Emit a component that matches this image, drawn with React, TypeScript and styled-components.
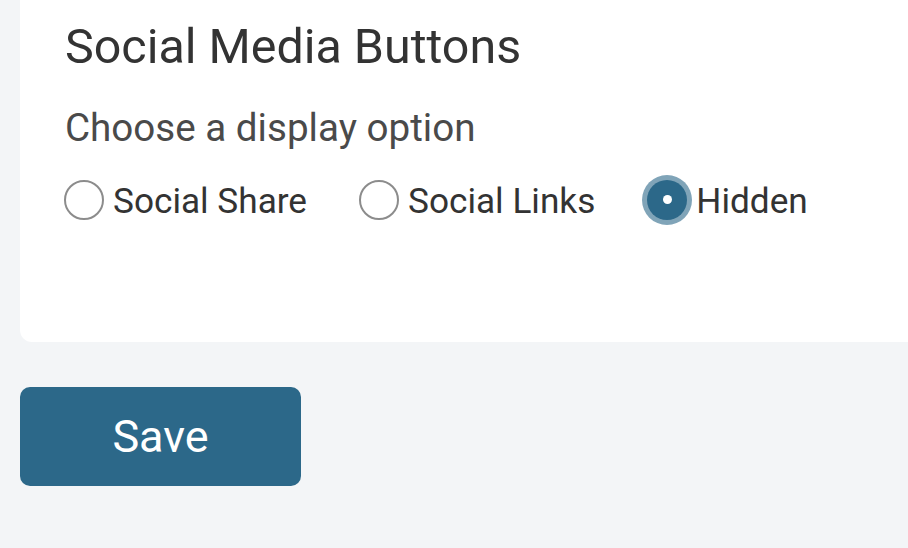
import React, { useState } from "react";
import styled, { createGlobalStyle } from "styled-components";

const GlobalStyle = createGlobalStyle`
  html, body {
    margin: 0;
    padding: 0;
    background: #f3f5f7;
    font-family: Roboto, "Liberation Sans", Arial, sans-serif;
    overflow: hidden;
  }
  * { box-sizing: border-box; }
`;

const Page = styled.div`
  width: 908px;
  height: 548px;
  padding-left: 20px;
  display: flex;
  flex-direction: column;
  background: #f3f5f7;
`;

const Card = styled.section`
  background: #ffffff;
  border-radius: 0 0 0 12px;
  padding: 19px 0 116px 45px;
  display: flex;
  flex-direction: column;
`;

const Title = styled.h2`
  margin: 0;
  font-size: 48.4px;
  line-height: 56px;
  font-weight: 400;
  color: #333333;
`;

const Subtitle = styled.p`
  margin: 31px 0 0;
  font-size: 38.6px;
  line-height: 44px;
  font-weight: 400;
  color: #4a4a4a;
`;

const OptionRow = styled.div`
  margin-top: 26px;
  margin-left: -1px;
  height: 50px;
  display: flex;
  align-items: center;
  gap: 52px;
`;

const Option = styled.label`
  display: flex;
  align-items: center;
  gap: 9px;
  cursor: pointer;
`;

const RadioCircle = styled.span<{ $checked: boolean }>`
  position: relative;
  width: 40px;
  height: 40px;
  border-radius: 50%;
  flex: none;
  margin-top: -3px;
  border: ${(p) => (p.$checked ? "none" : "2px solid #8c8c8c")};
  background: ${(p) => (p.$checked ? "#2c6889" : "#ffffff")};
  box-shadow: ${(p) => (p.$checked ? "0 0 0 5px rgba(44, 104, 137, 0.6)" : "none")};

  &::after {
    content: "";
    display: ${(p) => (p.$checked ? "block" : "none")};
    position: absolute;
    left: 50%;
    top: 50%;
    width: 9px;
    height: 9px;
    margin: -4.5px 0 0 -4.5px;
    border-radius: 50%;
    background: #ffffff;
  }
`;

const OptionLabel = styled.span`
  font-size: 35.2px;
  line-height: 41px;
  color: #333333;
`;

const SaveButton = styled.button`
  margin-top: 45px;
  width: 281px;
  height: 99px;
  border: none;
  border-radius: 10px;
  background: #2c6889;
  color: #ffffff;
  font-family: Roboto, "Liberation Sans", Arial, sans-serif;
  font-size: 45px;
  font-weight: 400;
  cursor: pointer;
`;

const options = ["Social Share", "Social Links", "Hidden"];

export default function App() {
  const [selected, setSelected] = useState("Hidden");
  return (
    <>
      <GlobalStyle />
      <Page>
        <Card>
          <Title>Social Media Buttons</Title>
          <Subtitle>Choose a display option</Subtitle>
          <OptionRow>
            {options.map((o) => (
              <Option key={o} onClick={() => setSelected(o)}>
                <RadioCircle $checked={selected === o} />
                <OptionLabel>{o}</OptionLabel>
              </Option>
            ))}
          </OptionRow>
        </Card>
        <div>
          <SaveButton>Save</SaveButton>
        </div>
      </Page>
    </>
  );
}
